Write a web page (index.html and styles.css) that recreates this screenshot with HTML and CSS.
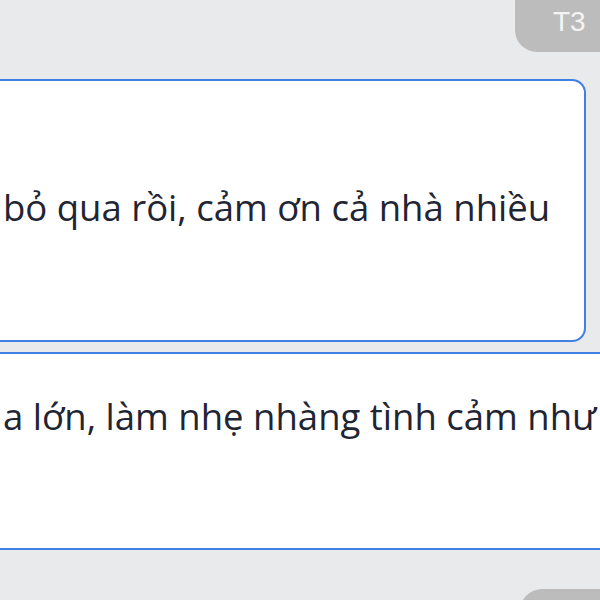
FILE: index.html
```html
<!DOCTYPE html>
<html lang="vi">
<head>
    <meta charset="UTF-8">
    <meta name="viewport" content="width=device-width, initial-scale=1.0">
    <title>Tin nhắn</title>
    <link rel="stylesheet" href="styles.css">
</head>
<body>
    <div class="tag tag-top">T3</div>

    <div class="thread">
        <div class="bubble bubble-first">
            <p class="bubble-text">bỏ qua rồi, cảm ơn cả nhà nhiều</p>
        </div>
        <div class="bubble bubble-second">
            <p class="bubble-text">a lớn, làm nhẹ nhàng tình cảm như</p>
        </div>
        <div class="tag tag-next"></div>
    </div>
</body>
</html>
```

FILE: styles.css
```css
body {
    margin: 0;
    background-color: #e9eaec;
    font-family: "Open Sans", "Noto Sans", sans-serif;
    color: #1f2533;
    overflow: hidden;
    height: 600px;
}
.tag {
    background: #bcbcbc;
    color: #f4f4f4;
    font-family: "Liberation Sans", Arial, sans-serif;
    font-size: 28px;
}
.tag-top {
    position: absolute;
    top: 0;
    right: -20px;
    width: 105px;
    height: 52px;
    border-bottom-left-radius: 22px;
    padding-left: 38px;
    box-sizing: border-box;
    line-height: 44px;
}
.thread {
    display: flex;
    flex-direction: column;
    padding-top: 79px;
}
.bubble {
    background: white;
    border: 2px solid #3f7fe6;
    box-sizing: border-box;
    margin-left: -20px;
    padding-left: 21px;
}
.bubble-first {
    height: 263px;
    margin-right: 14px;
    border-radius: 14px;
    padding-top: 103px;
}
.bubble-second {
    height: 198px;
    margin-top: 10px;
    margin-right: -20px;
    border-radius: 14px;
    padding-top: 39px;
}
.bubble-text {
    margin: 0;
    font-size: 36.5px;
    line-height: 46px;
    white-space: nowrap;
}
.tag-next {
    align-self: flex-end;
    width: 100px;
    height: 40px;
    margin-top: 39px;
    margin-right: -20px;
    border-top-left-radius: 22px;
}
```
